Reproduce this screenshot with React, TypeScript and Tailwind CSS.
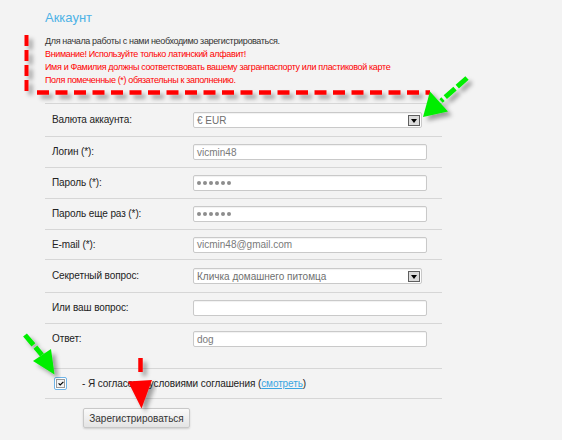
type Row = {
  label: string;
  h: string;
  kind: "select" | "text" | "password";
  value?: string;
  top?: boolean;
};

const rows: Row[] = [
  { label: "Валюта аккаунта:", h: "h-[33px]", kind: "select", value: "€ EUR" },
  { label: "Логин (*):", h: "h-[31px]", kind: "text", value: "vicmin48" },
  { label: "Пароль (*):", h: "h-[31px]", kind: "password" },
  { label: "Пароль еще раз (*):", h: "h-[31px]", kind: "password" },
  { label: "E-mail (*):", h: "h-[30px]", kind: "text", value: "vicmin48@gmail.com" },
  { label: "Секретный вопрос:", h: "h-[33px]", kind: "select", value: "Кличка домашнего питомца" },
  { label: "Или ваш вопрос:", h: "h-[31px]", kind: "text", value: "" },
  { label: "Ответ:", h: "h-[45px]", kind: "text", value: "dog", top: true },
];

function Field({ row }: { row: Row }) {
  if (row.kind === "select") {
    return (
      <div className="flex h-[16px] w-[229px] items-center justify-between rounded-[2px] border border-[#c9c9c9] bg-white pl-[3px] pr-[1px] text-[10px] text-[#6f6f6f] shadow-[inset_0_1px_1px_rgba(0,0,0,0.06)]">
        <span>{row.value}</span>
        <span className="mb-[1px] flex h-[11px] w-[12px] items-center justify-center self-end border border-[#5f5f5f] bg-[#dcdcdc]">
          <svg width="6" height="4" viewBox="0 0 6 4">
            <path d="M0 0h6L3 4z" fill="#000" />
          </svg>
        </span>
      </div>
    );
  }
  return (
    <div className="flex h-[16px] w-[234px] items-center rounded-[2px] border border-[#c9c9c9] bg-white px-[3px] text-[10px] text-[#7a7a7a] shadow-[inset_0_1px_1px_rgba(0,0,0,0.06)]">
      {row.kind === "password" ? (
        <div className="flex gap-[2px]">
          {[0, 1, 2, 3, 4, 5].map((i) => (
            <span key={i} className="h-[4px] w-[4px] rounded-full bg-[#8d8d8d]" />
          ))}
        </div>
      ) : (
        <span>{row.value}</span>
      )}
    </div>
  );
}

function Marks() {
  return (
    <svg className="pointer-events-none absolute inset-0 h-full w-full" viewBox="0 0 562 440">
      <defs>
        <filter id="sh" x="-20%" y="-20%" width="140%" height="140%">
          <feDropShadow dx="4" dy="4" stdDeviation="2" floodColor="#000" floodOpacity="0.35" />
        </filter>
      </defs>
      <g filter="url(#sh)">
        <line x1="26.5" y1="35" x2="26.5" y2="95" stroke="#ff0000" strokeWidth="4" strokeDasharray="11 4" />
        <line x1="37" y1="92.5" x2="430" y2="92.5" stroke="#ff0000" strokeWidth="4.5" strokeDasharray="12 6.5" />
      </g>
      <g filter="url(#sh)">
        <line x1="467" y1="78" x2="441" y2="101" stroke="#00ee00" strokeWidth="5" strokeDasharray="13 3" />
        <polygon points="423,117 430,91.5 448,111.5" fill="#00ee00" />
      </g>
      <g filter="url(#sh)">
        <line x1="25" y1="335" x2="42" y2="355" stroke="#00ee00" strokeWidth="5" strokeDasharray="13 3" />
        <polygon points="33,361 51,349 54.5,374.5" fill="#00ee00" />
      </g>
      <g filter="url(#sh)">
        <line x1="140.5" y1="358" x2="140.5" y2="372" stroke="#ff0000" strokeWidth="4.5" />
        <polygon points="128,381.5 152,380 141.5,408.5" fill="#ff0000" />
      </g>
    </svg>
  );
}

export default function App() {
  return (
    <div className="relative h-[440px] w-[562px] overflow-hidden bg-[#f3f3f3] font-['Liberation_Sans',Arial,sans-serif]">
      <div className="pl-[45px] pt-[10px]">
        <h1 className="text-[13px] leading-[16px] text-[#4db2e6]">Аккаунт</h1>
        <div className="mt-[9px] text-[9px] leading-[13px] tracking-[-0.35px]">
          <p className="text-[#333]">Для начала работы с нами необходимо зарегистрироваться.</p>
          <p className="text-[#ff0000]">Внимание! Используйте только латинский алфавит!</p>
          <p className="text-[#ff0000]">Имя и Фамилия должны соответствовать вашему загранпаспорту или пластиковой карте</p>
          <p className="text-[#ff0000]">Поля помеченные (*) обязательны к заполнению.</p>
        </div>

        <div className="mt-[16px] w-[397px] border-t border-[#d6d6d6]">
          {rows.map((row) => (
            <div
              key={row.label}
              className={`flex ${row.h} border-b border-[#d6d6d6] pl-[7px] ${row.top ? "items-start pt-[7px]" : "items-center"}`}
            >
              <div className="w-[141px] text-[10px] leading-[16px] tracking-[-0.1px] text-[#222]">{row.label}</div>
              <Field row={row} />
            </div>
          ))}
          <div className="flex h-[30px] items-center border-b border-[#d6d6d6] pl-[9px]">
            <span className="flex h-[13px] w-[13px] items-center justify-center rounded-[2px] border border-[#6fb4e8] bg-white">
              <span className="flex h-[9px] w-[9px] items-center justify-center border border-[#9a9a9a] bg-[#f4f4f4]">
                <svg width="6" height="5" viewBox="0 0 6 5">
                  <path d="M0.6 2.4L2.2 4L5.4 0.8" fill="none" stroke="#000" strokeWidth="1.2" />
                </svg>
              </span>
            </span>
            <span className="ml-[15px] text-[10px] tracking-[-0.1px] text-[#222]">
              - Я согласен с условиями соглашения (
              <span className="text-[#3aa6e2] underline">смотреть</span>)
            </span>
          </div>
        </div>

        <button className="ml-[38px] mt-[9px] h-[20px] w-[107px] rounded-[2px] border border-[#c8c8c8] bg-gradient-to-b from-[#fafafa] to-[#e4e4e4] text-[10px] text-[#333] shadow-[0_1px_2px_rgba(0,0,0,0.15)]">
          Зарегистрироваться
        </button>
      </div>
      <Marks />
    </div>
  );
}
